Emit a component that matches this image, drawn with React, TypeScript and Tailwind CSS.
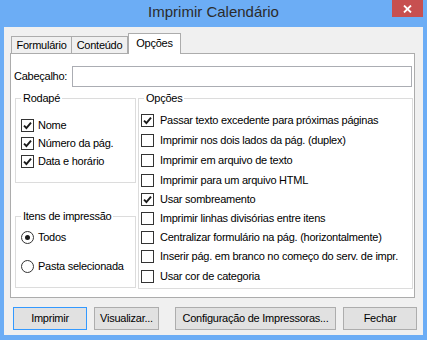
import type { ReactNode } from "react";

const footerItems = [
  { label: "Nome", checked: true },
  { label: "Número da pág.", checked: true },
  { label: "Data e horário", checked: true },
];

const printOptions = [
  { label: "Passar texto excedente para próximas páginas", checked: true, tall: true },
  { label: "Imprimir nos dois lados da pág. (duplex)", checked: false, tall: true },
  { label: "Imprimir em arquivo de texto", checked: false, tall: true },
  { label: "Imprimir para um arquivo HTML", checked: false, tall: true },
  { label: "Usar sombreamento", checked: true, tall: false },
  { label: "Imprimir linhas divisórias entre itens", checked: false, tall: false },
  { label: "Centralizar formulário na pág. (horizontalmente)", checked: false, tall: false },
  { label: "Inserir pág. em branco no começo do serv. de impr.", checked: false, tall: false },
  { label: "Usar cor de categoria", checked: false, tall: true },
];

function CheckBox({ checked }: { checked: boolean }) {
  return (
    <span className="w-[13px] h-[13px] shrink-0 border border-[#333] bg-white flex items-center justify-center">
      {checked && (
        <svg width="9" height="9" viewBox="0 0 9 9">
          <path d="M1 4.6 L3.4 7 L8 1.6" stroke="#1a1a1a" strokeWidth="1.9" fill="none" />
        </svg>
      )}
    </span>
  );
}

function Radio({ checked }: { checked: boolean }) {
  return (
    <span className="w-[13px] h-[13px] shrink-0 rounded-full border border-[#333] bg-white flex items-center justify-center">
      {checked && <span className="w-[5px] h-[5px] rounded-full bg-[#1a1a1a]" />}
    </span>
  );
}

// legend sits inside the fieldset padding, so its offset is given per group
function Group({
  title,
  className,
  legendClass,
  children,
}: {
  title: string;
  className: string;
  legendClass: string;
  children: ReactNode;
}) {
  return (
    <fieldset className={"border border-[#dcdcdc] " + className}>
      <legend className={"px-[2px] leading-[13px] " + legendClass}>{title}</legend>
      {children}
    </fieldset>
  );
}

function Button({ label, width, primary }: { label: string; width: string; primary?: boolean }) {
  return (
    <div
      className={
        "h-[23px] flex items-center justify-center border bg-[#e1e1e1] " +
        width +
        (primary ? " border-[#3399ff]" : " border-[#adadad]")
      }
    >
      {label}
    </div>
  );
}

export default function App() {
  return (
    <div className="w-[427px] h-[340px] bg-[#6cadf5] flex flex-col text-[11px] tracking-[-0.25px] text-black font-['Liberation_Sans',Arial,sans-serif]">
      <div className="h-[27px] relative flex items-center justify-center pb-[2px]">
        <span className="text-[15px] tracking-normal text-[#2b2b2b]">Imprimir Calendário</span>
        <div className="absolute top-0 right-[4px] w-[31px] h-[17px] bg-[#c75050] flex items-center justify-center">
          <svg width="9" height="8" viewBox="0 0 9 8">
            <path d="M1 0.5 L8 7.5 M8 0.5 L1 7.5" stroke="#fff" strokeWidth="1.8" />
          </svg>
        </div>
      </div>

      <div className="flex-1 mx-[4px] mb-[5px] bg-[#f0f0f0] pt-[6px] pl-[6px] flex flex-col">
        <div className="h-[21px] flex items-end pl-[1px] relative z-10">
          <div className="w-[61px] h-[17px] mb-[1px] border border-b-0 border-[#acacac] bg-[#f0f0f0] flex items-center justify-center">
            Formulário
          </div>
          <div className="w-[56px] h-[17px] mb-[1px] border border-l-0 border-b-0 border-[#acacac] bg-[#f0f0f0] flex items-center justify-center">
            Conteúdo
          </div>
          <div className="w-[53px] h-[21px] border border-b-0 border-[#acacac] bg-white flex items-center justify-center pb-[2px]">
            Opções
          </div>
        </div>

        <div className="w-[405px] h-[245px] -mt-px border border-[#acacac] bg-white flex flex-col">
          <div className="mt-[12px] pl-[3px] pr-[2px] flex items-center">
            <span className="w-[58px]">Cabeçalho:</span>
            <div className="w-[340px] h-[21px] border border-[#abadb3] bg-white" />
          </div>

          <div className="mt-[5px] pl-[4px] flex gap-[2px]">
            <div className="w-[121px] flex flex-col">
              <Group title="Rodapé" className="h-[91px] pt-[11px] pl-[5px]" legendClass="ml-0">
                {footerItems.map((item) => (
                  <div key={item.label} className="h-[18px] flex items-center gap-[4px]">
                    <CheckBox checked={item.checked} />
                    <span>{item.label}</span>
                  </div>
                ))}
              </Group>
              <Group
                title="Itens de impressão"
                className="mt-[27px] h-[78px] pt-[5px] pl-[5px]"
                legendClass="ml-0"
              >
                <div className="flex flex-col gap-[11px]">
                  <div className="h-[18px] flex items-center gap-[4px]">
                    <Radio checked />
                    <span>Todos</span>
                  </div>
                  <div className="h-[18px] flex items-center gap-[4px]">
                    <Radio checked={false} />
                    <span>Pasta selecionada</span>
                  </div>
                </div>
              </Group>
            </div>

            <Group title="Opções" className="w-[275px] h-[197px] pt-[5px] pl-[2px]" legendClass="ml-[3px]">
              {printOptions.map((item) => (
                <div
                  key={item.label}
                  className={(item.tall ? "h-[20px]" : "h-[19px]") + " flex items-center gap-[6px]"}
                >
                  <CheckBox checked={item.checked} />
                  <span className="whitespace-nowrap">{item.label}</span>
                </div>
              ))}
            </Group>
          </div>
        </div>

        <div className="mt-[9px] pl-[3px] flex">
          <Button label="Imprimir" width="w-[74px]" primary />
          <div className="ml-[7px]">
            <Button label="Visualizar..." width="w-[65px]" />
          </div>
          <div className="ml-[16px]">
            <Button label="Configuração de Impressoras..." width="w-[161px]" />
          </div>
          <div className="ml-[7px]">
            <Button label="Fechar" width="w-[74px]" />
          </div>
        </div>
      </div>
    </div>
  );
}
